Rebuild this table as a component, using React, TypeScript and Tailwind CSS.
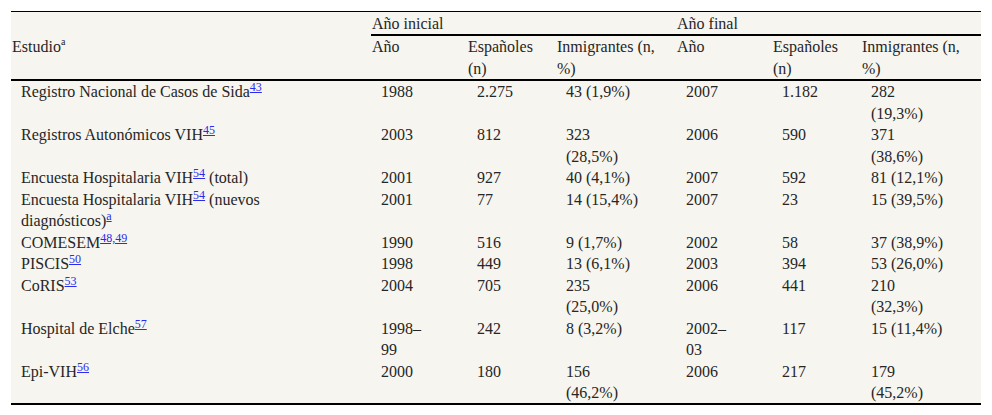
import React from 'react';

function Sup({ n }: { n: string }) {
  return <sup className="text-[12px] text-[#2a2af0] underline">{n}</sup>;
}

const rows: { study: React.ReactNode; cells: React.ReactNode[] }[] = [
  { study: <>Registro Nacional de Casos de Sida<Sup n="43" /></>, cells: ['1988', '2.275', '43 (1,9%)', '2007', '1.182', <>282<br />(19,3%)</>] },
  { study: <>Registros Autonómicos VIH<Sup n="45" /></>, cells: ['2003', '812', <>323<br />(28,5%)</>, '2006', '590', <>371<br />(38,6%)</>] },
  { study: <>Encuesta Hospitalaria VIH<Sup n="54" /> (total)</>, cells: ['2001', '927', '40 (4,1%)', '2007', '592', '81 (12,1%)'] },
  { study: <>Encuesta Hospitalaria VIH<Sup n="54" /> (nuevos<br />diagnósticos)<Sup n="a" /></>, cells: ['2001', '77', '14 (15,4%)', '2007', '23', '15 (39,5%)'] },
  { study: <>COMESEM<Sup n="48,49" /></>, cells: ['1990', '516', '9 (1,7%)', '2002', '58', '37 (38,9%)'] },
  { study: <>PISCIS<Sup n="50" /></>, cells: ['1998', '449', '13 (6,1%)', '2003', '394', '53 (26,0%)'] },
  { study: <>CoRIS<Sup n="53" /></>, cells: ['2004', '705', <>235<br />(25,0%)</>, '2006', '441', <>210<br />(32,3%)</>] },
  { study: <>Hospital de Elche<Sup n="57" /></>, cells: [<>1998–<br />99</>, '242', '8 (3,2%)', <>2002–<br />03</>, '117', '15 (11,4%)'] },
  { study: <>Epi-VIH<Sup n="56" /></>, cells: ['2000', '180', <>156<br />(46,2%)</>, '2006', '217', <>179<br />(45,2%)</>] },
];

const widths = ['w-[360px]', 'w-[96px]', 'w-[89px]', 'w-[120px]', 'w-[96px]', 'w-[89px]', 'w-[120px]'];

const headers: React.ReactNode[] = [
  'Año',
  <>Españoles<br />(n)</>,
  <>Inmigrantes (n,<br />%)</>,
  'Año',
  <>Españoles<br />(n)</>,
  <>Inmigrantes (n,<br />%)</>,
];

export default function App() {
  return (
    <div className="bg-white w-[992px] h-[415px] pt-[11px] pl-[11px] [font-family:'Liberation_Serif','Times_New_Roman',serif]">
      <table className="w-[970px] border-collapse table-fixed bg-[#f7f5ef] text-[16px] leading-[21.47px] text-[#262626] border-t border-t-black border-b-2 border-b-black">
        <colgroup>
          {widths.map((w, i) => (
            <col key={i} className={w} />
          ))}
        </colgroup>
        <thead>
          <tr>
            <th rowSpan={2} className="text-left font-normal align-middle pl-px pt-[2px]">
              Estudio<sup className="text-[10px] -top-[0.7em]">a</sup>
            </th>
            <th colSpan={3} className="text-left font-normal align-top pl-px pt-px border-b-2 border-b-black">
              Año inicial
            </th>
            <th colSpan={3} className="text-left font-normal align-top pl-px pt-px border-b-2 border-b-black">
              Año final
            </th>
          </tr>
          <tr className="border-b-2 border-b-black">
            {headers.map((h, i) => (
              <th key={i} className="text-left font-normal align-top pl-px whitespace-nowrap">
                {h}
              </th>
            ))}
          </tr>
        </thead>
        <tbody>
          {rows.map((r, i) => (
            <tr key={i}>
              <td className="align-top pl-[10px] whitespace-nowrap">{r.study}</td>
              {r.cells.map((c, j) => (
                <td key={j} className="align-top pl-[10px] whitespace-nowrap">
                  {c}
                </td>
              ))}
            </tr>
          ))}
        </tbody>
      </table>
    </div>
  );
}
